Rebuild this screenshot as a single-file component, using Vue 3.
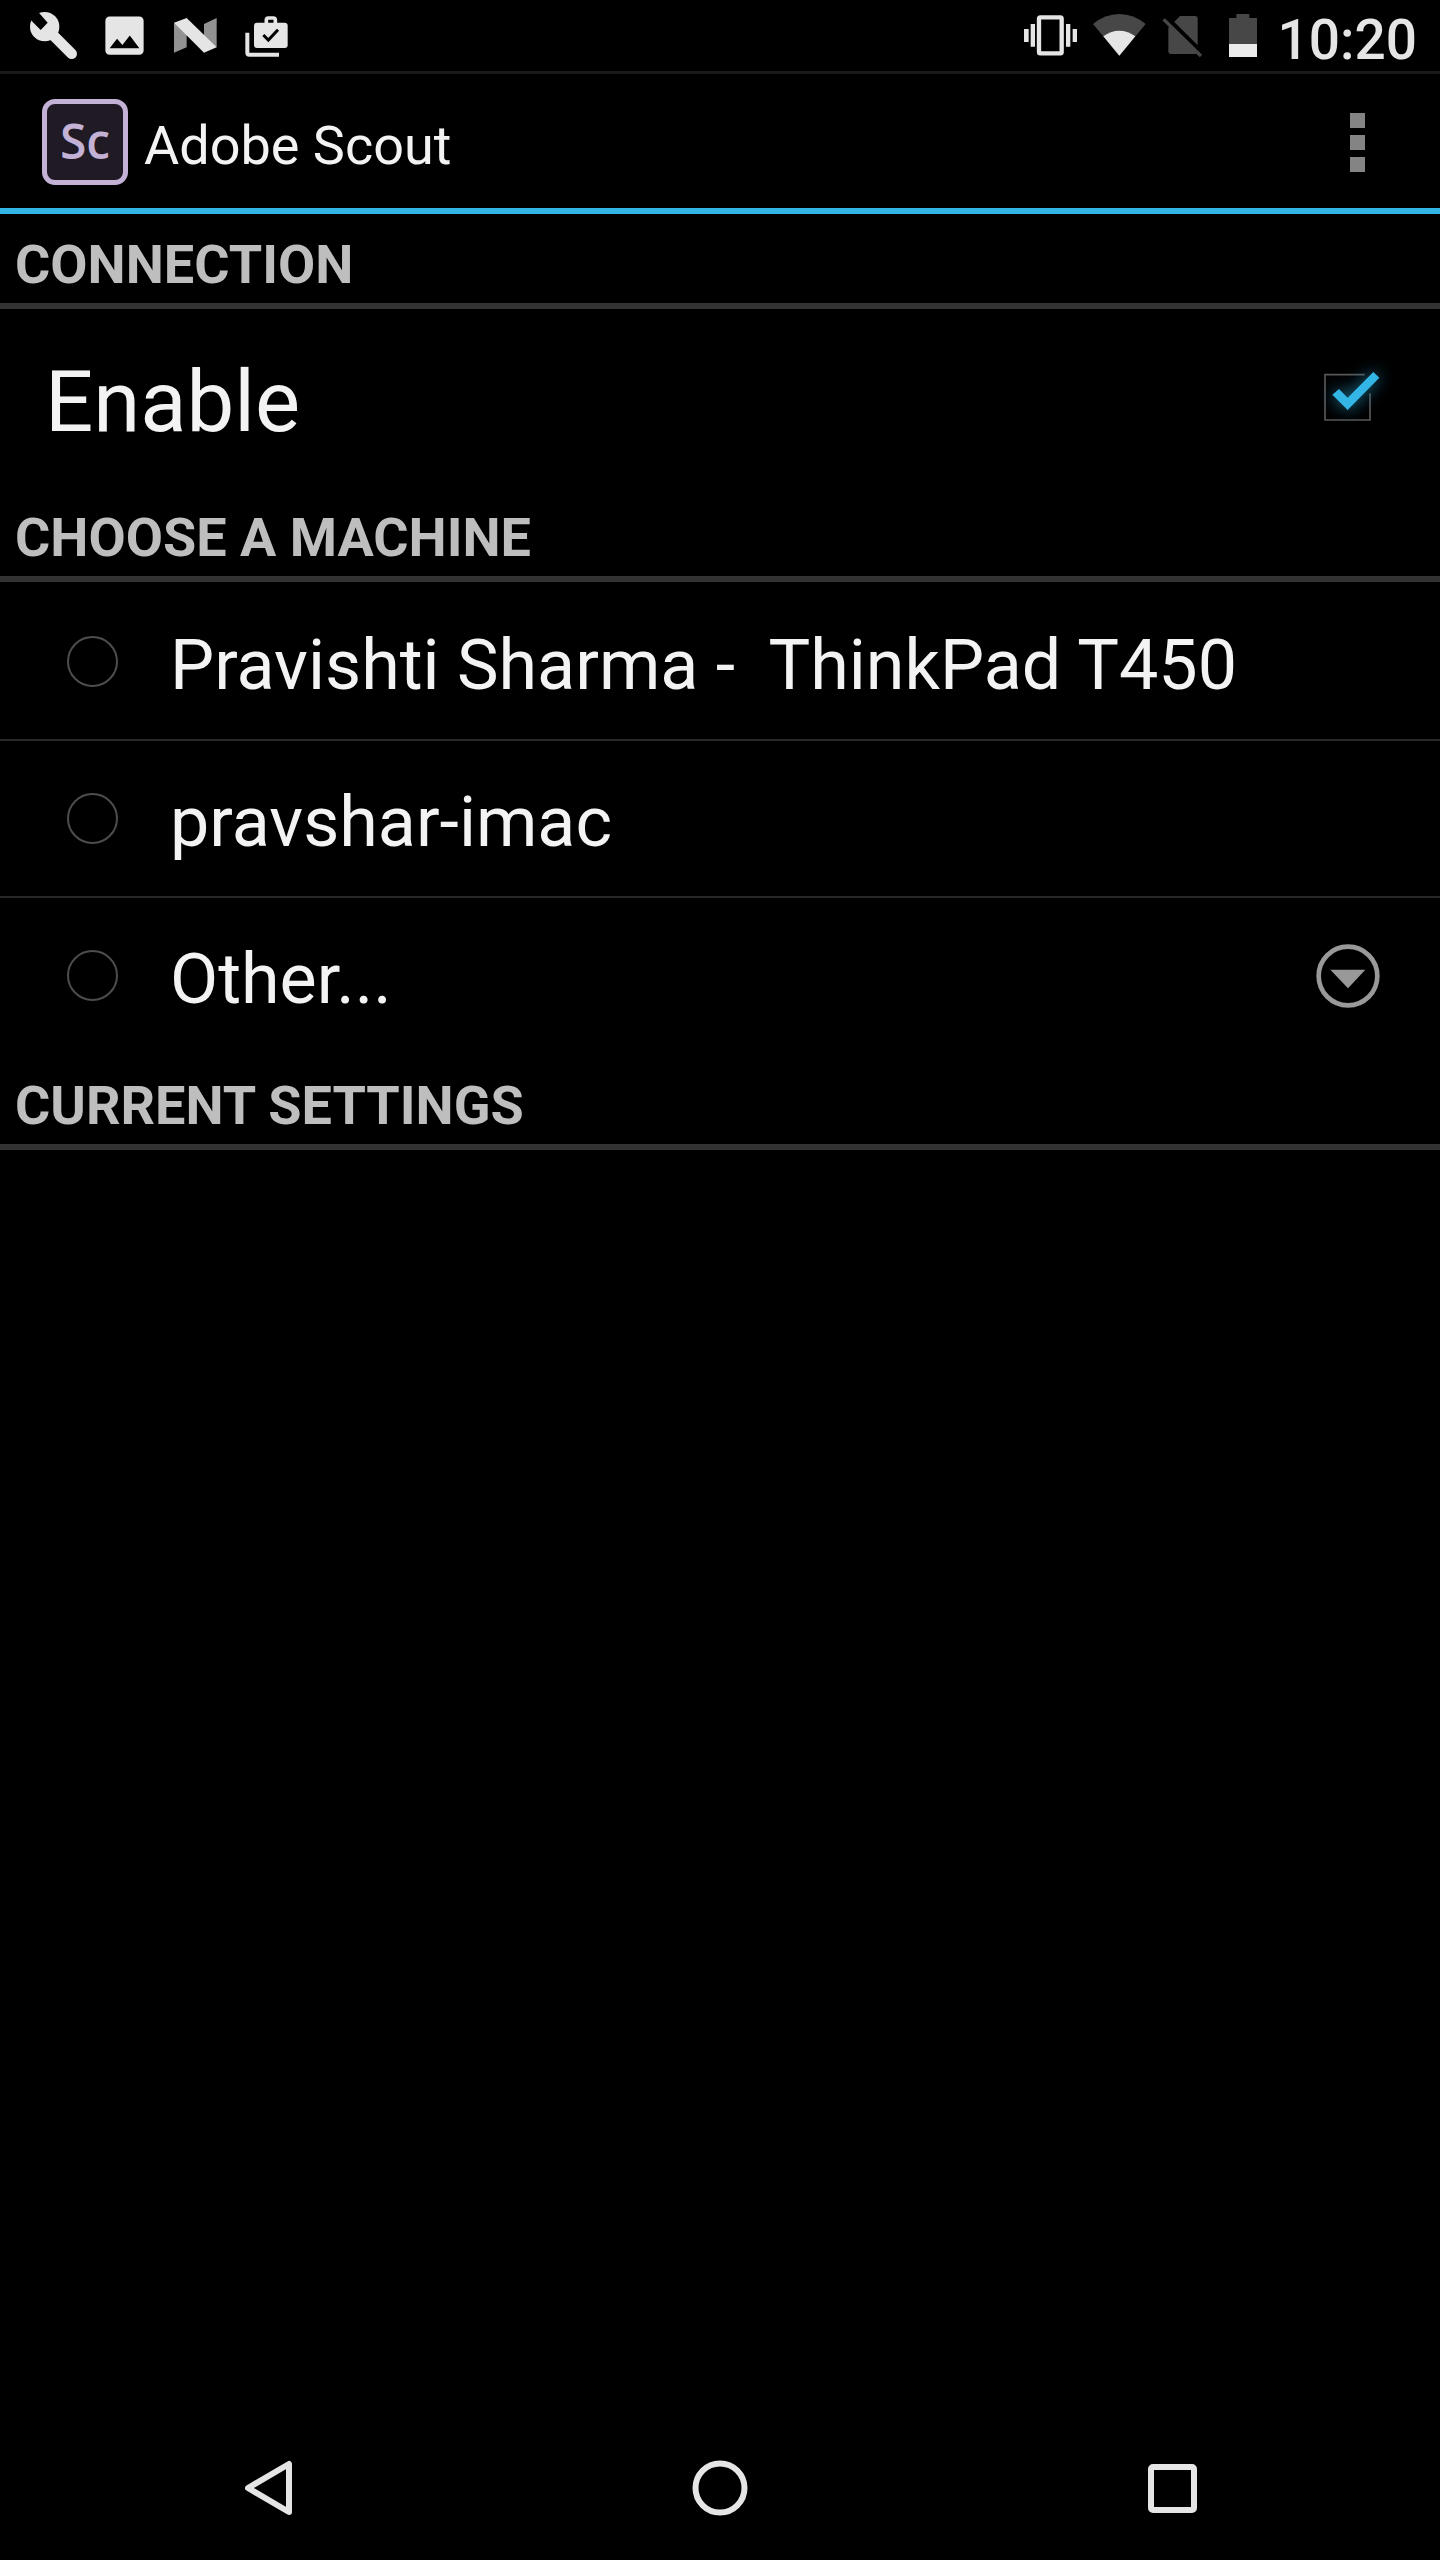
<script setup>
import { ref } from 'vue'

const enabled = ref(true)
const selectedMachine = ref('')
const otherOpen = ref(false)

const machines = ref([
  { id: 'thinkpad', name: 'Pravishti Sharma -  ThinkPad T450' },
  { id: 'imac', name: 'pravshar-imac' },
  { id: 'other', name: 'Other...', expandable: true }
])

const toggleOther = () => {
  otherOpen.value = !otherOpen.value
}
</script>

<template>
  <div class="screen">
    <!-- Status bar -->
    <div class="status-bar">
      <div class="notifications">
        <svg class="icon" viewBox="84 30 153 153">
          <circle cx="134" cy="80" r="44" fill="#e5e5e5" />
          <path d="M80 30L106 26L143 68L122 90L86 54z" fill="#000" />
          <path d="M158 104L215 161" stroke="#e5e5e5" stroke-width="32" stroke-linecap="round" />
        </svg>
        <svg class="icon" viewBox="0 0 24 24">
          <path fill="#e5e5e5" d="M21 19V5c0-1.100-.9-2-2-2H5c-1.100 0-2 .9-2 2v14c0 1.100.9 2 2 2h14c1.100 0 2-.9 2-2zM8.500 13.500l2.500 3.010L14.500 12l4.500 6H5l3.500-4.500z" />
        </svg>
        <svg class="icon" viewBox="510 30 153 153">
          <path d="M522 68L560 90V142L522 158z" fill="#929292" />
          <path d="M612 72L650 54V142L612 120z" fill="#929292" />
          <path d="M522 68L560 54L650 142L612 158z" fill="#e5e5e5" />
        </svg>
        <svg class="icon" viewBox="723 30 153 153">
          <rect x="762" y="68" width="101" height="76" rx="9" fill="#e5e5e5" />
          <path d="M799 70V60Q799 54 805 54H820Q826 54 826 60V70" fill="none" stroke="#e5e5e5" stroke-width="11" />
          <path d="M790 105L805 120L834 89" fill="none" stroke="#000" stroke-width="9" />
          <path d="M742 98V158Q742 164 748 164H837" fill="none" stroke="#e5e5e5" stroke-width="12" />
        </svg>
      </div>
      <div class="system">
        <svg class="vibrate" viewBox="72 30 159 153" fill="#e5e5e5">
          <rect x="117" y="52" width="68" height="108" rx="4" fill="none" stroke="#e5e5e5" stroke-width="13" />
          <path d="M92 72h13v68h-13zM72 87h14v39h-14zM198 72h13v68h-13zM218 87h13v39h-13z" />
        </svg>
        <svg class="wifi" viewBox="278 30 159 153">
          <path d="M357 167L278 72Q314 42 357 42T436 72z" fill="#474747" />
          <path d="M357 167L309 109Q331 92 357 92T405 109z" fill="#e5e5e5" />
        </svg>
        <svg class="sim" viewBox="486 30 123 153">
          <path d="M505 83L540 48H585Q593 48 593 56V154Q593 162 585 162H513Q505 162 505 154z" fill="#474747" />
          <path d="M498 50L612 164" stroke="#000" stroke-width="13" />
          <path d="M491 58L603 168" stroke="#474747" stroke-width="10" />
        </svg>
        <svg class="battery" viewBox="657 30 126 153">
          <path d="M687 132V54H709V42H748V54H771V132z" fill="#474747" />
          <path d="M687 132h84v39h-84z" fill="#ebebeb" />
        </svg>
        <span class="clock">10:20</span>
      </div>
    </div>

    <!-- Action bar -->
    <header class="action-bar">
      <div class="logo">Sc</div>
      <h1>Adobe Scout</h1>
      <button type="button" class="icon-button" aria-label="More options">
        <svg viewBox="0 0 64 64" fill="#848484">
          <path d="M25 3h15v15h-15zM25 25h15v15h-15zM25 47h15v15h-15z" />
        </svg>
      </button>
    </header>

    <main>
      <h2>CONNECTION</h2>
      <label class="enable-row">
        <span class="enable-text">Enable</span>
        <span class="check">
          <input type="checkbox" v-model="enabled">
          <svg viewBox="108 78 192 192">
            <path v-if="enabled" d="M254 104H135V240H270V160" fill="none" stroke="#585858" stroke-width="5" />
            <path v-else d="M135 104H270V240H135z" fill="none" stroke="#585858" stroke-width="5" />
            <path v-if="enabled" class="tick" d="M157 164L177 147L203 173L280 96L298 113L203 210z" />
          </svg>
        </span>
      </label>

      <h2>CHOOSE A MACHINE</h2>
      <ul>
        <li v-for="machine in machines" :key="machine.id">
          <label class="machine">
            <input type="radio" name="machine" :value="machine.id" v-model="selectedMachine">
            <span class="machine-name">{{ machine.name }}</span>
          </label>
          <button
            v-if="machine.expandable"
            type="button"
            class="icon-button"
            aria-label="Expand"
            :aria-expanded="otherOpen"
            @click="toggleOther"
          >
            <svg viewBox="107 130 192 192">
              <circle cx="203" cy="226" r="88" fill="none" stroke="#999" stroke-width="14" />
              <path d="M150 207H255L203 263z" fill="#999" />
            </svg>
          </button>
        </li>
      </ul>

      <h2>CURRENT SETTINGS</h2>
    </main>

    <!-- Navigation bar -->
    <nav>
      <button type="button" aria-label="Back">
        <svg viewBox="0 0 56 56">
          <path d="M8 28L49 4V52z" />
        </svg>
      </button>
      <button type="button" aria-label="Home">
        <svg viewBox="0 0 56 56">
          <circle cx="28" cy="28" r="24.500" />
        </svg>
      </button>
      <button type="button" aria-label="Recent apps">
        <svg viewBox="0 0 56 56">
          <rect x="7" y="7" width="43" height="43" rx="2" />
        </svg>
      </button>
    </nav>
  </div>
</template>

<style>
body {
  margin: 0;
  background: #000;
}
</style>

<style scoped>
.screen {
  display: flex;
  flex-direction: column;
  min-height: 100vh;
  background: #000;
  color: #f3f3f3;
  font-family: Roboto, "Noto Sans", sans-serif;
}

svg {
  display: block;
}

.status-bar {
  display: flex;
  justify-content: space-between;
  height: 71px;
  padding: 0 23px 0 28px;
  border-bottom: 3px solid #1a1a1a;
}

.notifications,
.system {
  display: flex;
  align-items: center;
}

.notifications {
  gap: 20px;
}

.system {
  gap: 16px;
}

.icon {
  width: 51px;
  height: 51px;
}

.vibrate,
.wifi {
  width: 53px;
  height: 51px;
}

.sim {
  width: 41px;
  height: 51px;
}

.battery {
  width: 42px;
  height: 51px;
}

.clock {
  padding-top: 8px;
  color: #e5e5e5;
  font-size: 55px;
  font-weight: 500;
  line-height: 64px;
}

.action-bar {
  display: flex;
  align-items: center;
  padding: 25px 51px 23px 42px;
  border-bottom: 6px solid #33b5e5;
}

.logo {
  box-sizing: border-box;
  width: 86px;
  height: 86px;
  border: 5px solid #c3b2d6;
  border-radius: 13px;
  background: #1f1a24;
  color: #c3b2d6;
  font-family: "Open Sans", "Noto Sans", sans-serif;
  font-size: 48px;
  font-weight: 600;
  line-height: 74px;
  text-align: center;
}

h1 {
  flex: 1;
  margin: 0;
  padding: 8px 0 0 16px;
  font-size: 54px;
  font-weight: 400;
  line-height: 64px;
}

.icon-button {
  width: 64px;
  height: 64px;
  padding: 0;
  border: none;
  background: none;
  cursor: pointer;
}

main {
  flex: 1;
}

h2 {
  margin: 0;
  padding: 19px 15px 6px;
  border-bottom: 6px solid #333;
  color: #bebebe;
  font-size: 54px;
  font-weight: 700;
  line-height: 64px;
}

.enable-row {
  display: flex;
  align-items: center;
  justify-content: space-between;
  padding: 39px 60px 39px 45px;
}

.enable-text {
  padding-top: 8px;
  font-size: 85px;
  line-height: 92px;
}

.check {
  position: relative;
  width: 64px;
  height: 64px;
}

.check input {
  position: absolute;
  inset: 0;
  width: 100%;
  height: 100%;
  margin: 0;
  opacity: 0;
}

.check svg {
  width: 64px;
  height: 64px;
  overflow: visible;
}

.tick {
  fill: #33b5e5;
  filter: drop-shadow(0 0 24px #1f7fa5);
}

ul {
  margin: 0;
  padding: 2px 0 0;
  list-style: none;
}

li {
  display: flex;
  align-items: center;
  padding-right: 60px;
  border-bottom: 2px solid #272727;
}

li:last-child {
  border-color: transparent;
}

.machine {
  display: flex;
  flex: 1;
  align-items: center;
  padding: 33px 0 34px 67px;
}

.machine input {
  box-sizing: border-box;
  width: 51px;
  height: 51px;
  margin: 0;
  appearance: none;
  border: 2px solid #4d4d4d;
  border-radius: 50%;
}

.machine input:checked {
  background: radial-gradient(#33b5e5 40%, transparent 45%);
}

.machine-name {
  padding: 8px 0 0 52px;
  font-size: 70px;
  line-height: 80px;
  white-space: pre;
}

nav {
  display: flex;
  padding: 0 42px;
}

nav button {
  display: flex;
  flex: 1;
  justify-content: center;
  padding: 44px 0;
  border: none;
  background: none;
  cursor: pointer;
}

nav svg {
  width: 56px;
  height: 56px;
  fill: none;
  stroke: #e5e5e5;
  stroke-width: 6;
  stroke-linejoin: round;
}
</style>
